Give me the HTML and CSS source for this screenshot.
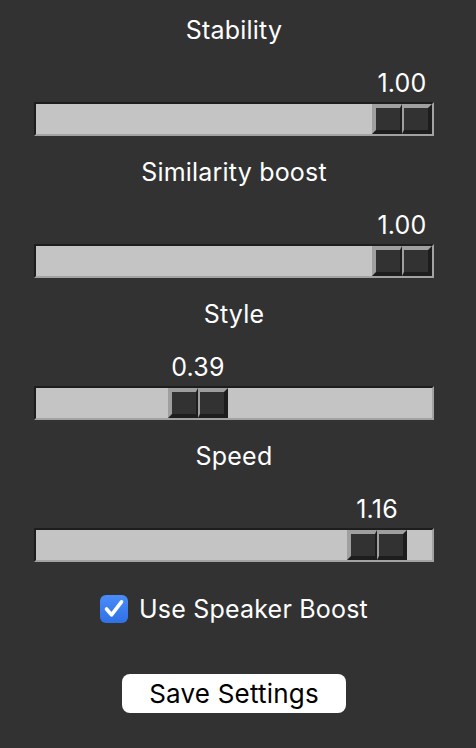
FILE: index.html
```html
<!DOCTYPE html>
<html>
<head>
<meta charset="utf-8">
<link rel="stylesheet" href="styles.css">
</head>
<body>
<div class="panel">
  <div class="setting">
    <div class="title">Stability</div>
    <div class="value-row"><span class="value" style="margin-left:336px">1.00</span></div>
    <div class="trough"><div class="slider" style="margin-left:336px"><div class="half left"></div><div class="half right"></div></div></div>
  </div>
  <div class="setting">
    <div class="title">Similarity boost</div>
    <div class="value-row"><span class="value" style="margin-left:336px">1.00</span></div>
    <div class="trough"><div class="slider" style="margin-left:336px"><div class="half left"></div><div class="half right"></div></div></div>
  </div>
  <div class="setting">
    <div class="title">Style</div>
    <div class="value-row"><span class="value" style="margin-left:132px">0.39</span></div>
    <div class="trough"><div class="slider" style="margin-left:132px"><div class="half left"></div><div class="half right"></div></div></div>
  </div>
  <div class="setting">
    <div class="title">Speed</div>
    <div class="value-row"><span class="value" style="margin-left:311px">1.16</span></div>
    <div class="trough"><div class="slider" style="margin-left:311px"><div class="half left"></div><div class="half right"></div></div></div>
  </div>
  <label class="check-row">
    <span class="checkbox">
      <svg width="28" height="28" viewBox="0 0 28 28"><path d="M6.5 14 L11.5 19.8 L21.5 6.8" fill="none" stroke="#fff" stroke-width="3.6" stroke-linecap="round" stroke-linejoin="round"/></svg>
    </span>
    <span class="check-label">Use Speaker Boost</span>
  </label>
  <div class="button-row">
    <button class="save">Save Settings</button>
  </div>
</div>
</body>
</html>
```
FILE: styles.css
```css
html, body {
  margin: 0;
  padding: 0;
  background: #323232;
}
body {
  width: 476px;
  height: 748px;
  overflow: hidden;
  font-family: Inter, "Liberation Sans", sans-serif;
  color: #ffffff;
  letter-spacing: 0.2px;
}
.panel {
  width: 400px;
  margin-left: 34px;
  padding-top: 15px;
  display: flex;
  flex-direction: column;
}
.setting {
  display: flex;
  flex-direction: column;
  margin-bottom: 21px;
}
.title {
  font-size: 25px;
  line-height: 30px;
  height: 30px;
  text-align: center;
  margin-bottom: 23px;
}
.value-row {
  height: 30px;
  padding-left: 2px;
  display: flex;
  margin-bottom: 4px;
}
.value {
  width: 60px;
  display: flex;
  justify-content: center;
  white-space: nowrap;
  font-size: 25px;
  line-height: 30px;
}
.trough {
  height: 30px;
  display: flex;
  background: #c4c4c4;
  border-style: solid;
  border-width: 2px;
  border-color: #1d1d1d #a2a2a2 #a2a2a2 #1d1d1d;
}
.slider {
  width: 60px;
  height: 30px;
  display: flex;
}
.half {
  height: 30px;
  box-sizing: border-box;
  background: #323232;
  border-style: solid;
  border-color: #9f9f9f #1d1d1d #1d1d1d #9f9f9f;
}
.half.left {
  width: 30px;
  border-width: 4px 2px 4px 4px;
}
.half.right {
  width: 30px;
  border-width: 4px 4px 4px 2px;
}
.check-row {
  margin-top: 11px;
  height: 30px;
  display: flex;
  align-items: center;
  justify-content: center;
  gap: 11px;
}
.checkbox {
  width: 28px;
  height: 28px;
  border-radius: 6px;
  background: linear-gradient(#4a8cf8, #2f70e6);
  display: flex;
}
.check-label {
  font-size: 25px;
  line-height: 30px;
}
.button-row {
  margin-top: 50px;
  display: flex;
  justify-content: center;
}
.save {
  width: 224px;
  height: 39px;
  border: none;
  border-radius: 8px;
  background: #ffffff;
  color: #000000;
  font-family: Inter, "Liberation Sans", sans-serif;
  font-size: 26px;
  letter-spacing: 0.2px;
  line-height: 30px;
  padding: 0;
}
```
